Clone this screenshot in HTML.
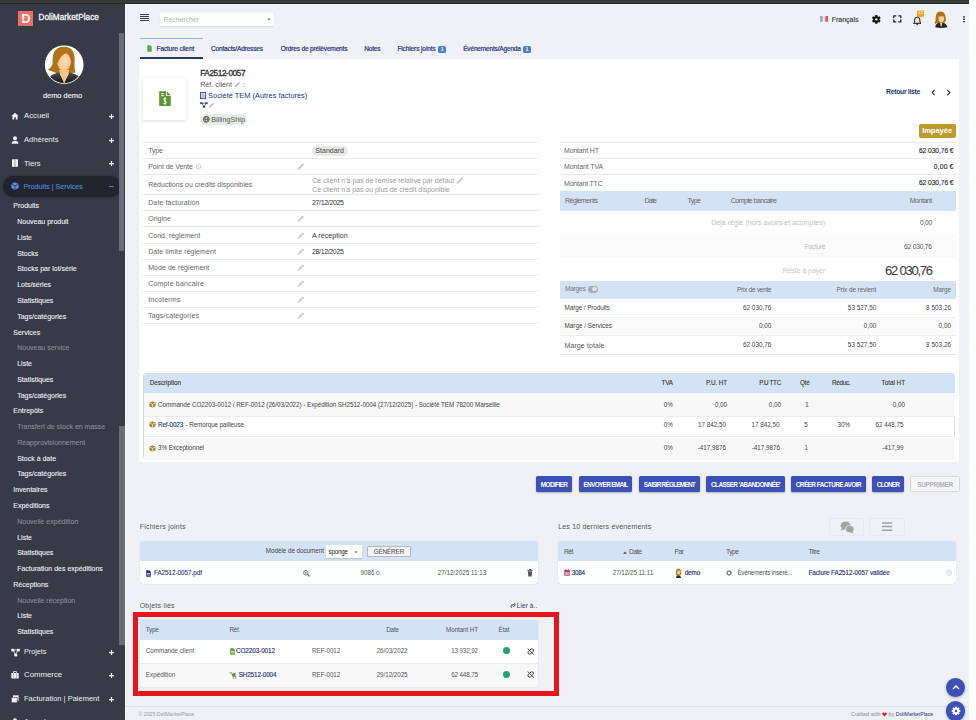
<!DOCTYPE html>
<html><head><meta charset="utf-8"><title>FA2512-0057</title>
<style>
html,body{margin:0;padding:0;width:976px;height:720px;overflow:hidden;background:#f0f1f6;}
body{position:relative;font-family:"Liberation Sans", sans-serif;}
.t{position:absolute;white-space:nowrap;font-family:"Liberation Sans", sans-serif;}
.r{position:absolute;}
</style></head><body>
<div class="r" style="left:0.00px;top:0.00px;width:976.00px;height:720.00px;background:#f0f1f6;"></div>
<div class="r" style="left:969.00px;top:0.00px;width:7.00px;height:720.00px;background:#ffffff;"></div>
<div class="r" style="left:0.00px;top:0.00px;width:969.00px;height:3.00px;background:#3a3a3b;"></div>
<div class="r" style="left:0.00px;top:3.00px;width:969.00px;height:1.00px;background:#262828;"></div>
<div class="r" style="left:0.00px;top:4.00px;width:125.00px;height:716.00px;background:#373b47;"></div>
<div class="r" style="left:18.20px;top:11.10px;width:14.90px;height:14.50px;background:#ec6f60;"></div>
<div class="t" style="left:15.90px;width:20px;text-align:center;top:12.77px;font-size:12.4px;line-height:12.4px;color:#fff;font-weight:700;">D</div>
<div class="t" style="left:38.50px;top:13.91px;font-size:8.2px;line-height:8.2px;color:#f4f4f8;font-weight:400;letter-spacing:0.057px;-webkit-text-stroke:0.3px #f4f4f8;">DoliMarketPlace</div>
<svg class="r" style="left:44px;top:45px;" width="40" height="40" viewBox="0 0 40 40">
<defs><clipPath id="avc"><circle cx="20.2" cy="19.7" r="18.5"/></clipPath>
<radialGradient id="fg" cx="0.55" cy="0.45" r="0.6"><stop offset="0" stop-color="#fde3bd"/><stop offset="1" stop-color="#f3c084"/></radialGradient>
<linearGradient id="bg1" x1="0" y1="0" x2="0" y2="1"><stop offset="0" stop-color="#4a4a4e"/><stop offset="1" stop-color="#111"/></linearGradient></defs>
<circle cx="20.2" cy="19.7" r="19.3" fill="#ffffff"/>
<g clip-path="url(#avc)">
<path d="M9.5 27 Q6 25.5 4 24.8 Q7.5 23 8.6 19 Q7.6 7 13.5 3.2 Q20 0.4 26 3.2 Q31.5 7 30.6 16 Q30.2 23 31.5 27.5 L24 28.5 L14 28.5 Z" fill="#b0731a"/>
<path d="M4.5 40 L5.2 32.5 Q8 29 15 27.6 L20.2 37 L25.4 27.6 Q32 29 35.4 31.8 L36 40 Z" fill="url(#bg1)"/>
<path d="M15 25 L20.2 39 L25.4 25 Z" fill="#f5c386"/>
<ellipse cx="20" cy="16.8" rx="6.9" ry="9" fill="url(#fg)"/>
<path d="M11.8 17.5 Q11.5 8.5 19 6.2 Q23 5.8 24 7.5 Q17 9 13.8 17.8 Z" fill="#b0731a"/>
<path d="M26.4 9 Q28 14 27 24 L29.5 24 Q30 14 27 8Z" fill="#a86c14"/>
</g></svg>
<div class="t" style="left:22.50px;width:80px;text-align:center;top:91.90px;font-size:7.4px;line-height:7.4px;color:#eceef2;font-weight:400;-webkit-text-stroke:0.15px #eceef2;">demo demo</div>
<svg class="r" style="left:11px;top:111.7px;" width="8" height="8" viewBox="0 0 8 8"><path d="M0.5 4 L4 0.8 L7.5 4 L6.6 4 L6.6 7.5 L4.8 7.5 L4.8 5.2 L3.2 5.2 L3.2 7.5 L1.4 7.5 L1.4 4Z" fill="#f0f0f4"/></svg>
<div class="t" style="left:24.00px;top:111.93px;font-size:7.75px;line-height:7.75px;color:#eceef2;font-weight:400;">Accueil</div>
<svg class="r" style="left:107.5px;top:112.8px;" width="7" height="7" viewBox="0 0 7 7"><path d="M1.0 3.5 L6.0 3.5 M3.5 1.0 L3.5 6.0" stroke="#e8e9ee" stroke-width="1.25"/></svg>
<svg class="r" style="left:11px;top:135.6px;" width="8" height="8" viewBox="0 0 8 8"><circle cx="4" cy="2.3" r="2" fill="#f0f0f4"/><path d="M0.6 7.8 Q0.6 4.8 4 4.8 Q7.4 4.8 7.4 7.8Z" fill="#f0f0f4"/></svg>
<div class="t" style="left:24.00px;top:135.93px;font-size:7.55px;line-height:7.55px;color:#eceef2;font-weight:400;">Adhérents</div>
<svg class="r" style="left:107.5px;top:136.7px;" width="7" height="7" viewBox="0 0 7 7"><path d="M1.0 3.5 L6.0 3.5 M3.5 1.0 L3.5 6.0" stroke="#e8e9ee" stroke-width="1.25"/></svg>
<svg class="r" style="left:11px;top:159.2px;" width="8" height="8" viewBox="0 0 8 8"><rect x="1" y="0.3" width="6" height="7.5" fill="#f0f0f4"/><rect x="3.6" y="1" width="0.8" height="6.5" fill="#8a8f9a"/></svg>
<div class="t" style="left:24.00px;top:159.50px;font-size:7.6px;line-height:7.6px;color:#eceef2;font-weight:400;">Tiers</div>
<svg class="r" style="left:107.5px;top:160.29999999999998px;" width="7" height="7" viewBox="0 0 7 7"><path d="M1.0 3.5 L6.0 3.5 M3.5 1.0 L3.5 6.0" stroke="#e8e9ee" stroke-width="1.25"/></svg>
<div class="r" style="left:2.90px;top:175.60px;width:118.10px;height:21.50px;background:#22252c;border-radius:11px;box-shadow:0 0 3px rgba(0,0,0,0.35);"></div>
<svg class="r" style="left:10.5px;top:182.3px;" width="8" height="8" viewBox="0 0 8 8"><path d="M4 0.3 L7.6 2 L7.6 6 L4 7.8 L0.4 6 L0.4 2Z" fill="#5d8ee8"/><path d="M0.6 2.2 L4 3.9 L7.4 2.2 M4 3.9 L4 7.6" stroke="#22252b" stroke-width="0.7" fill="none"/></svg>
<div class="t" style="left:23.50px;top:183.62px;font-size:7.15px;line-height:7.15px;color:#4f85dc;font-weight:400;-webkit-text-stroke:0.15px #4f85dc;">Produits | Services</div>
<svg class="r" style="left:108px;top:183px;" width="7" height="7" viewBox="0 0 7 7"><path d="M1 3.5 L6 3.5" stroke="#4f72b8" stroke-width="1.2"/></svg>
<div class="t" style="left:13.30px;top:202.34px;font-size:7.0px;line-height:7.0px;color:#eef0f4;font-weight:400;-webkit-text-stroke:0.1px #eef0f4;">Produits</div>
<div class="t" style="left:17.20px;top:218.11px;font-size:7.0px;line-height:7.0px;color:#eef0f4;font-weight:400;-webkit-text-stroke:0.1px #eef0f4;">Nouveau produit</div>
<div class="t" style="left:17.20px;top:233.88px;font-size:7.0px;line-height:7.0px;color:#eef0f4;font-weight:400;-webkit-text-stroke:0.1px #eef0f4;">Liste</div>
<div class="t" style="left:17.20px;top:249.65px;font-size:7.0px;line-height:7.0px;color:#eef0f4;font-weight:400;-webkit-text-stroke:0.1px #eef0f4;">Stocks</div>
<div class="t" style="left:17.20px;top:265.42px;font-size:7.0px;line-height:7.0px;color:#eef0f4;font-weight:400;-webkit-text-stroke:0.1px #eef0f4;">Stocks par lot/série</div>
<div class="t" style="left:17.20px;top:281.19px;font-size:7.0px;line-height:7.0px;color:#eef0f4;font-weight:400;-webkit-text-stroke:0.1px #eef0f4;">Lots/séries</div>
<div class="t" style="left:17.20px;top:296.96px;font-size:7.0px;line-height:7.0px;color:#eef0f4;font-weight:400;-webkit-text-stroke:0.1px #eef0f4;">Statistiques</div>
<div class="t" style="left:17.20px;top:312.73px;font-size:7.0px;line-height:7.0px;color:#eef0f4;font-weight:400;-webkit-text-stroke:0.1px #eef0f4;">Tags/catégories</div>
<div class="t" style="left:13.30px;top:328.50px;font-size:7.0px;line-height:7.0px;color:#eef0f4;font-weight:400;-webkit-text-stroke:0.1px #eef0f4;">Services</div>
<div class="t" style="left:17.20px;top:344.27px;font-size:7.0px;line-height:7.0px;color:#878c98;font-weight:400;-webkit-text-stroke:0.1px #878c98;">Nouveau service</div>
<div class="t" style="left:17.20px;top:360.04px;font-size:7.0px;line-height:7.0px;color:#eef0f4;font-weight:400;-webkit-text-stroke:0.1px #eef0f4;">Liste</div>
<div class="t" style="left:17.20px;top:375.81px;font-size:7.0px;line-height:7.0px;color:#eef0f4;font-weight:400;-webkit-text-stroke:0.1px #eef0f4;">Statistiques</div>
<div class="t" style="left:17.20px;top:391.58px;font-size:7.0px;line-height:7.0px;color:#eef0f4;font-weight:400;-webkit-text-stroke:0.1px #eef0f4;">Tags/catégories</div>
<div class="t" style="left:13.30px;top:407.35px;font-size:7.0px;line-height:7.0px;color:#eef0f4;font-weight:400;-webkit-text-stroke:0.1px #eef0f4;">Entrepôts</div>
<div class="t" style="left:17.20px;top:423.12px;font-size:7.0px;line-height:7.0px;color:#878c98;font-weight:400;-webkit-text-stroke:0.1px #878c98;">Transfert de stock en masse</div>
<div class="t" style="left:17.20px;top:438.89px;font-size:7.0px;line-height:7.0px;color:#878c98;font-weight:400;-webkit-text-stroke:0.1px #878c98;">Réapprovisionnement</div>
<div class="t" style="left:17.20px;top:454.66px;font-size:7.0px;line-height:7.0px;color:#eef0f4;font-weight:400;-webkit-text-stroke:0.1px #eef0f4;">Stock à date</div>
<div class="t" style="left:17.20px;top:470.43px;font-size:7.0px;line-height:7.0px;color:#eef0f4;font-weight:400;-webkit-text-stroke:0.1px #eef0f4;">Tags/catégories</div>
<div class="t" style="left:13.30px;top:486.20px;font-size:7.0px;line-height:7.0px;color:#eef0f4;font-weight:400;-webkit-text-stroke:0.1px #eef0f4;">Inventaires</div>
<div class="t" style="left:13.30px;top:501.97px;font-size:7.0px;line-height:7.0px;color:#eef0f4;font-weight:400;-webkit-text-stroke:0.1px #eef0f4;">Expéditions</div>
<div class="t" style="left:17.20px;top:517.74px;font-size:7.0px;line-height:7.0px;color:#878c98;font-weight:400;-webkit-text-stroke:0.1px #878c98;">Nouvelle expédition</div>
<div class="t" style="left:17.20px;top:533.51px;font-size:7.0px;line-height:7.0px;color:#eef0f4;font-weight:400;-webkit-text-stroke:0.1px #eef0f4;">Liste</div>
<div class="t" style="left:17.20px;top:549.28px;font-size:7.0px;line-height:7.0px;color:#eef0f4;font-weight:400;-webkit-text-stroke:0.1px #eef0f4;">Statistiques</div>
<div class="t" style="left:17.20px;top:565.05px;font-size:7.0px;line-height:7.0px;color:#eef0f4;font-weight:400;-webkit-text-stroke:0.1px #eef0f4;">Facturation des expéditions</div>
<div class="t" style="left:13.30px;top:580.82px;font-size:7.0px;line-height:7.0px;color:#eef0f4;font-weight:400;-webkit-text-stroke:0.1px #eef0f4;">Réceptions</div>
<div class="t" style="left:17.20px;top:596.59px;font-size:7.0px;line-height:7.0px;color:#878c98;font-weight:400;-webkit-text-stroke:0.1px #878c98;">Nouvelle réception</div>
<div class="t" style="left:17.20px;top:612.36px;font-size:7.0px;line-height:7.0px;color:#eef0f4;font-weight:400;-webkit-text-stroke:0.1px #eef0f4;">Liste</div>
<div class="t" style="left:17.20px;top:628.13px;font-size:7.0px;line-height:7.0px;color:#eef0f4;font-weight:400;-webkit-text-stroke:0.1px #eef0f4;">Statistiques</div>
<svg class="r" style="left:11px;top:647.5px;" width="9" height="9" viewBox="0 0 9 9"><rect x="0.3" y="0.8" width="3" height="2.6" fill="#f0f0f4"/><rect x="5.8" y="0.8" width="3" height="2.6" fill="#f0f0f4"/><rect x="3.2" y="5.6" width="3" height="2.8" fill="#f0f0f4"/><path d="M2 2 L7 2 M2 2 L4.6 6.5 M7 2 L4.6 6.5" stroke="#f0f0f4" stroke-width="0.8"/></svg>
<div class="t" style="left:24.00px;top:648.00px;font-size:7.2px;line-height:7.2px;color:#eceef2;font-weight:400;">Projets</div>
<svg class="r" style="left:107.5px;top:648.6px;" width="7" height="7" viewBox="0 0 7 7"><path d="M1.0 3.5 L6.0 3.5 M3.5 1.0 L3.5 6.0" stroke="#e8e9ee" stroke-width="1.25"/></svg>
<svg class="r" style="left:11px;top:671.0px;" width="8" height="8" viewBox="0 0 8 8"><rect x="0.3" y="2" width="7.4" height="5.6" rx="0.6" fill="#f0f0f4"/><rect x="2.6" y="0.6" width="2.8" height="1.8" fill="none" stroke="#f0f0f4" stroke-width="0.8"/><rect x="2" y="2" width="0.6" height="5.6" fill="#8a8f9a"/><rect x="5.4" y="2" width="0.6" height="5.6" fill="#8a8f9a"/></svg>
<div class="t" style="left:24.00px;top:671.21px;font-size:7.8px;line-height:7.8px;color:#eceef2;font-weight:400;">Commerce</div>
<svg class="r" style="left:107.5px;top:672.1px;" width="7" height="7" viewBox="0 0 7 7"><path d="M1.0 3.5 L6.0 3.5 M3.5 1.0 L3.5 6.0" stroke="#e8e9ee" stroke-width="1.25"/></svg>
<svg class="r" style="left:11px;top:694.5px;" width="8" height="8" viewBox="0 0 8 8"><rect x="2" y="0.3" width="5.6" height="5.5" fill="#f0f0f4"/><rect x="0.3" y="2.3" width="5.8" height="5.5" fill="#f0f0f4" stroke="#373b47" stroke-width="0.6"/></svg>
<div class="t" style="left:24.00px;top:694.85px;font-size:7.5px;line-height:7.5px;color:#eceef2;font-weight:400;">Facturation | Paiement</div>
<svg class="r" style="left:107.5px;top:695.6px;" width="7" height="7" viewBox="0 0 7 7"><path d="M1.0 3.5 L6.0 3.5 M3.5 1.0 L3.5 6.0" stroke="#e8e9ee" stroke-width="1.25"/></svg>
<svg class="r" style="left:11px;top:718px;" width="8" height="8" viewBox="0 0 8 8"><circle cx="4" cy="2.3" r="2" fill="#f0f0f4"/><path d="M0.6 7.8 Q0.6 4.8 4 4.8 Q7.4 4.8 7.4 7.8Z" fill="#f0f0f4"/></svg>
<div class="t" style="left:24.00px;top:718.35px;font-size:7.5px;line-height:7.5px;color:#f0f0f4;font-weight:400;">Agenda</div>
<div class="r" style="left:119.00px;top:33.00px;width:5.00px;height:218.00px;background:#676d78;"></div>
<div class="r" style="left:119.00px;top:426.40px;width:5.60px;height:218.40px;background:#676d78;"></div>
<div class="r" style="left:125.00px;top:4.00px;width:1.00px;height:716.00px;background:#f5f6fa;"></div>
<div class="r" style="left:125.00px;top:418.00px;width:1.00px;height:302.00px;background:#fbfbfd;"></div>
<div class="r" style="left:140.00px;top:13.60px;width:9.30px;height:1.10px;background:#3a3a48;"></div>
<div class="r" style="left:140.00px;top:15.70px;width:9.30px;height:1.10px;background:#3a3a48;"></div>
<div class="r" style="left:140.00px;top:17.80px;width:9.30px;height:1.10px;background:#3a3a48;"></div>
<div class="r" style="left:140.00px;top:19.90px;width:9.30px;height:1.10px;background:#3a3a48;"></div>
<div class="r" style="left:160.00px;top:13.00px;width:114.00px;height:12.50px;background:#ffffff;box-shadow:0 1px 1px rgba(0,0,0,0.08);"></div>
<div class="t" style="left:163.50px;top:16.94px;font-size:6.9px;line-height:6.9px;color:#b0b0b8;font-weight:400;letter-spacing:-0.007px;">Rechercher</div>
<svg class="r" style="left:266.5px;top:17.8px;" width="4" height="3" viewBox="0 0 4 3"><path d="M0.4 0.5 L3.6 0.5 L2 2.5Z" fill="#777"/></svg>
<svg class="r" style="left:820px;top:16px;" width="9" height="6" viewBox="0 0 9 6"><rect x="0.2" y="0" width="2.6" height="5.8" fill="#86a0e0"/><rect x="2.8" y="0" width="2.6" height="5.8" fill="#e8e8ea"/><rect x="5.4" y="0" width="2.6" height="5.8" fill="#e85050"/></svg>
<div class="t" style="left:831.80px;top:16.19px;font-size:7.0px;line-height:7.0px;color:#3a3a40;font-weight:400;letter-spacing:-0.020px;-webkit-text-stroke:0.15px #3a3a40;">Français</div>
<svg class="r" style="left:871.5px;top:14.8px;" width="9" height="9" viewBox="0 0 9 9"><g transform="translate(4.3,4.4)"><circle r="3.2" fill="#111"/><rect x="-1.15" y="-4.4" width="2.3" height="2.2" rx="0.4" fill="#111" transform="rotate(0)"/><rect x="-1.15" y="-4.4" width="2.3" height="2.2" rx="0.4" fill="#111" transform="rotate(60)"/><rect x="-1.15" y="-4.4" width="2.3" height="2.2" rx="0.4" fill="#111" transform="rotate(120)"/><rect x="-1.15" y="-4.4" width="2.3" height="2.2" rx="0.4" fill="#111" transform="rotate(180)"/><rect x="-1.15" y="-4.4" width="2.3" height="2.2" rx="0.4" fill="#111" transform="rotate(240)"/><rect x="-1.15" y="-4.4" width="2.3" height="2.2" rx="0.4" fill="#111" transform="rotate(300)"/><circle r="1.2" fill="#f0f1f6"/></g></svg>
<svg class="r" style="left:892.6px;top:15px;" width="9" height="8" viewBox="0 0 9 8"><path d="M0.8 2.8 L0.8 0.8 L2.8 0.8 M5.8 0.8 L7.8 0.8 L7.8 2.8 M7.8 4.9 L7.8 6.9 L5.8 6.9 M2.8 6.9 L0.8 6.9 L0.8 4.9" stroke="#222" stroke-width="1.25" fill="none" stroke-linecap="round" stroke-linejoin="round"/></svg>
<svg class="r" style="left:913.4px;top:14.5px;" width="9" height="10" viewBox="0 0 9 10"><path d="M4.2 2 Q1.6 2.3 1.6 5.2 L1.6 7.3 L0.5 8.3 L8 8.3 L6.9 7.3 L6.9 5.2 Q6.9 2.3 4.2 2Z" fill="none" stroke="#111" stroke-width="1"/><rect x="3.3" y="8.6" width="1.9" height="1.1" rx="0.5" fill="#111"/></svg>
<div class="r" style="left:917.00px;top:10.00px;width:7.00px;height:6.90px;background:#f7a128;border-radius:1.5px;"></div>
<div class="t" style="left:915.50px;width:10px;text-align:center;top:11.26px;font-size:4.6px;line-height:4.6px;color:#ffe9c8;font-weight:700;">15</div>
<svg class="r" style="left:934px;top:11px;" width="14" height="17" viewBox="0 0 14 17"><path d="M1.2 16.2 Q1.5 11.6 7 11.2 Q12.5 11.6 13.4 16.2 Q7 17.6 1.2 16.2Z" fill="#262628"/>
<path d="M5.6 11.2 L7.2 16.4 L8.6 11.2Z" fill="#f5c386"/>
<path d="M1.2 13 Q0.2 11 1.6 10 Q1.2 4 3.2 1.6 Q6.5 -0.6 9.6 1.4 Q12 3.5 11.8 9.5 Q11.6 11.5 10 11.8 L3 12 Z" fill="#ad7414"/>
<ellipse cx="7.3" cy="7.2" rx="2.8" ry="4" fill="#f8cf9a"/>
<path d="M4.2 5.8 Q4.6 2.6 7.6 2.6 Q10.2 3 10.6 6.5 Q9 4.2 4.2 5.8Z" fill="#ad7414"/></svg>
<svg class="r" style="left:961.5px;top:15px;" width="4" height="8" viewBox="0 0 4 8"><circle cx="2" cy="1.8" r="0.85" fill="#222"/><circle cx="2" cy="4.2" r="0.85" fill="#222"/><circle cx="2" cy="6.6" r="0.85" fill="#222"/></svg>
<div class="r" style="left:140.00px;top:38.00px;width:63.00px;height:1.00px;background:#8fb0e6;"></div>
<div class="r" style="left:140.00px;top:57.00px;width:63.00px;height:2.00px;background:#263c5c;"></div>
<svg class="r" style="left:147px;top:44.8px;" width="5" height="7" viewBox="0 0 5 7"><path d="M0.3 0.3 L3.2 0.3 L4.7 1.8 L4.7 6.7 L0.3 6.7Z" fill="#5aa848"/></svg>
<div class="t" style="left:156.60px;top:46.14px;font-size:6.5px;line-height:6.5px;color:#25327a;font-weight:400;letter-spacing:-0.109px;-webkit-text-stroke:0.2px #25327a;">Facture client</div>
<div class="t" style="left:211.00px;top:46.14px;font-size:6.5px;line-height:6.5px;color:#25327a;font-weight:400;letter-spacing:-0.160px;-webkit-text-stroke:0.2px #25327a;">Contacts/Adresses</div>
<div class="t" style="left:280.80px;top:46.14px;font-size:6.5px;line-height:6.5px;color:#25327a;font-weight:400;letter-spacing:-0.144px;-webkit-text-stroke:0.2px #25327a;">Ordres de prélèvements</div>
<div class="t" style="left:364.20px;top:46.14px;font-size:6.5px;line-height:6.5px;color:#25327a;font-weight:400;letter-spacing:-0.145px;-webkit-text-stroke:0.2px #25327a;">Notes</div>
<div class="t" style="left:397.40px;top:46.14px;font-size:6.5px;line-height:6.5px;color:#25327a;font-weight:400;letter-spacing:-0.102px;-webkit-text-stroke:0.2px #25327a;">Fichiers joints</div>
<div class="t" style="left:463.20px;top:46.14px;font-size:6.5px;line-height:6.5px;color:#25327a;font-weight:400;letter-spacing:-0.165px;-webkit-text-stroke:0.2px #25327a;">Événements/Agenda</div>
<div class="r" style="left:437.80px;top:45.80px;width:8.60px;height:6.80px;background:#4c7dd2;border-radius:1.5px;"></div>
<div class="t" style="left:438.10px;width:8px;text-align:center;top:47.07px;font-size:5.2px;line-height:5.2px;color:#fff;font-weight:700;">1</div>
<div class="r" style="left:522.70px;top:45.80px;width:8.60px;height:6.80px;background:#4c7dd2;border-radius:1.5px;"></div>
<div class="t" style="left:523.00px;width:8px;text-align:center;top:47.07px;font-size:5.2px;line-height:5.2px;color:#fff;font-weight:700;">1</div>
<div class="r" style="left:139.20px;top:59.00px;width:819.80px;height:403.00px;background:#ffffff;"></div>
<div class="r" style="left:143.20px;top:77.90px;width:43.10px;height:42.10px;background:#ffffff;box-shadow:0 1px 3px rgba(0,0,0,0.16);"></div>
<svg class="r" style="left:158.6px;top:90.8px;" width="12" height="15.4" viewBox="0 0 12 15.4"><path d="M0.2 0.2 L7.0 0.2 L7.0 5.0 L11.8 5.0 L11.8 15.2 L0.2 15.2Z" fill="#5b9434"/>
<path d="M7.8 0.2 L11.8 4.2 L7.8 4.2Z" fill="#5b9434"/>
<rect x="2.0" y="2.3" width="3.2" height="0.9" fill="#fff"/><rect x="2.0" y="4.3" width="3.2" height="0.9" fill="#fff"/>
<path d="M7.3 7.6 Q6.2 7.0 5.3 7.6 Q4.6 8.4 5.4 9.4 Q6.4 10.2 7.0 10.8 Q7.6 11.8 6.6 12.4 Q5.6 12.9 4.6 12.2" stroke="#fff" stroke-width="1.1" fill="none"/>
<rect x="5.55" y="6.3" width="0.9" height="7.5" fill="#fff"/></svg>
<div class="t" style="left:200.20px;top:69.51px;font-size:8.2px;line-height:8.2px;color:#333;font-weight:400;letter-spacing:-0.384px;-webkit-text-stroke:0.35px #333;">FA2512-0057</div>
<div class="t" style="left:200.20px;top:81.00px;font-size:7.2px;line-height:7.2px;color:#555;font-weight:400;letter-spacing:-0.011px;">Réf. client</div>
<svg class="r" style="left:233.5px;top:80.5px;" width="7" height="7" viewBox="0 0 7 7"><path d="M0.8 6.2 L1.2 4.6 L5 0.8 L6.2 2 L2.4 5.8Z" fill="#bbb"/></svg>
<div class="t" style="left:242.50px;top:81.00px;font-size:7.2px;line-height:7.2px;color:#555;font-weight:400;">:</div>
<svg class="r" style="left:200.2px;top:91.9px;" width="6" height="7" viewBox="0 0 6 7"><rect x="0.4" y="0.4" width="5.2" height="6.2" fill="none" stroke="#3a3f8e" stroke-width="0.9"/><rect x="1.6" y="1.4" width="1" height="4.6" fill="#3a3f8e" opacity="0.6"/><rect x="3.4" y="1.4" width="1" height="4.6" fill="#3a3f8e" opacity="0.6"/></svg>
<div class="t" style="left:208.10px;top:92.10px;font-size:7.4px;line-height:7.4px;color:#25337c;font-weight:400;letter-spacing:0.012px;">Société TEM (Autres factures)</div>
<svg class="r" style="left:200px;top:102px;" width="8" height="6" viewBox="0 0 8 6"><rect x="0.2" y="0.3" width="2.2" height="1.8" fill="#25337c"/><rect x="5.4" y="0.3" width="2.2" height="1.8" fill="#25337c"/><rect x="2.9" y="3.8" width="2.2" height="1.9" fill="#25337c"/><path d="M1.3 1.2 L6.5 1.2 M1.3 1.2 L4 4.5 M6.5 1.2 L4 4.5" stroke="#25337c" stroke-width="0.7"/></svg>
<svg class="r" style="left:207.5px;top:101.5px;" width="7" height="7" viewBox="0 0 7 7"><path d="M0.8 6.2 L1.2 4.6 L5 0.8 L6.2 2 L2.4 5.8Z" fill="#c4c4c4"/></svg>
<div class="r" style="left:200.20px;top:114.00px;width:47.00px;height:11.00px;background:#e6ebe4;border-radius:5.5px;"></div>
<svg class="r" style="left:202.8px;top:116.3px;" width="7" height="7" viewBox="0 0 7 7"><circle cx="3.3" cy="3.3" r="2.9" fill="none" stroke="#444" stroke-width="0.9"/><ellipse cx="3.3" cy="3.3" rx="1.2" ry="2.9" fill="none" stroke="#444" stroke-width="0.7"/><path d="M0.4 3.3 L6.2 3.3" stroke="#444" stroke-width="0.7"/></svg>
<div class="t" style="left:211.20px;top:116.30px;font-size:7.2px;line-height:7.2px;color:#555;font-weight:400;letter-spacing:0.018px;">BillingShip</div>
<div class="t" style="left:886.10px;top:89.09px;font-size:6.8px;line-height:6.8px;color:#25357a;font-weight:700;letter-spacing:-0.292px;">Retour liste</div>
<svg class="r" style="left:930.5px;top:88.6px;" width="5" height="7" viewBox="0 0 5 7"><path d="M3.6 0.9 L1.2 3.5 L3.6 6.1" stroke="#222" stroke-width="1.1" fill="none"/></svg>
<svg class="r" style="left:945.8px;top:88.6px;" width="5" height="7" viewBox="0 0 5 7"><path d="M1.4 0.9 L3.8 3.5 L1.4 6.1" stroke="#222" stroke-width="1.1" fill="none"/></svg>
<div class="r" style="left:918.90px;top:124.00px;width:36.90px;height:13.70px;background:#bd9a2e;border-radius:2px;"></div>
<div class="t" style="left:907.10px;width:60px;text-align:center;top:127.30px;font-size:7.6px;line-height:7.6px;color:#ffffff;font-weight:700;letter-spacing:-0.070px;">Impayée</div>
<div class="r" style="left:143.10px;top:142.10px;width:397.20px;height:1.00px;background:#eaeaec;"></div>
<div class="r" style="left:143.10px;top:157.60px;width:397.20px;height:1.00px;background:#eaeaec;"></div>
<div class="r" style="left:143.10px;top:173.60px;width:397.20px;height:1.00px;background:#eaeaec;"></div>
<div class="r" style="left:143.10px;top:193.70px;width:397.20px;height:1.00px;background:#eaeaec;"></div>
<div class="r" style="left:143.10px;top:209.90px;width:397.20px;height:1.00px;background:#eaeaec;"></div>
<div class="r" style="left:143.10px;top:226.10px;width:397.20px;height:1.00px;background:#eaeaec;"></div>
<div class="r" style="left:143.10px;top:242.80px;width:397.20px;height:1.00px;background:#eaeaec;"></div>
<div class="r" style="left:143.10px;top:258.80px;width:397.20px;height:1.00px;background:#eaeaec;"></div>
<div class="r" style="left:143.10px;top:274.80px;width:397.20px;height:1.00px;background:#eaeaec;"></div>
<div class="r" style="left:143.10px;top:290.80px;width:397.20px;height:1.00px;background:#eaeaec;"></div>
<div class="r" style="left:143.10px;top:307.10px;width:397.20px;height:1.00px;background:#eaeaec;"></div>
<div class="r" style="left:143.10px;top:323.10px;width:397.20px;height:1.00px;background:#eaeaec;"></div>
<div class="t" style="left:148.20px;top:147.19px;font-size:7.0px;line-height:7.0px;color:#666;font-weight:400;letter-spacing:-0.125px;">Type</div>
<div class="t" style="left:148.20px;top:162.99px;font-size:7.0px;line-height:7.0px;color:#666;font-weight:400;letter-spacing:-0.064px;">Point de Vente</div>
<svg class="r" style="left:297.2px;top:162.9px;" width="7.5" height="7.5" viewBox="0 0 7.5 7.5"><path d="M0.5 6.9 L0.9 5.0 L5.2 0.7 Q5.7 0.3 6.2 0.8 L6.7 1.3 Q7.1 1.8 6.7 2.2 L2.4 6.5Z" fill="#cdcdcd"/></svg>
<div class="t" style="left:148.20px;top:180.89px;font-size:7.0px;line-height:7.0px;color:#666;font-weight:400;letter-spacing:-0.009px;">Réductions ou crédits disponibles</div>
<div class="t" style="left:148.20px;top:198.99px;font-size:7.0px;line-height:7.0px;color:#666;font-weight:400;letter-spacing:0.125px;">Date facturation</div>
<div class="t" style="left:148.20px;top:215.19px;font-size:7.0px;line-height:7.0px;color:#666;font-weight:400;letter-spacing:0.006px;">Origine</div>
<svg class="r" style="left:297.2px;top:215.1px;" width="7.5" height="7.5" viewBox="0 0 7.5 7.5"><path d="M0.5 6.9 L0.9 5.0 L5.2 0.7 Q5.7 0.3 6.2 0.8 L6.7 1.3 Q7.1 1.8 6.7 2.2 L2.4 6.5Z" fill="#cdcdcd"/></svg>
<div class="t" style="left:148.20px;top:231.59px;font-size:7.0px;line-height:7.0px;color:#666;font-weight:400;letter-spacing:0.011px;">Cond. règlement</div>
<svg class="r" style="left:297.2px;top:231.5px;" width="7.5" height="7.5" viewBox="0 0 7.5 7.5"><path d="M0.5 6.9 L0.9 5.0 L5.2 0.7 Q5.7 0.3 6.2 0.8 L6.7 1.3 Q7.1 1.8 6.7 2.2 L2.4 6.5Z" fill="#cdcdcd"/></svg>
<div class="t" style="left:148.20px;top:247.89px;font-size:7.0px;line-height:7.0px;color:#666;font-weight:400;letter-spacing:0.078px;">Date limite règlement</div>
<svg class="r" style="left:297.2px;top:247.8px;" width="7.5" height="7.5" viewBox="0 0 7.5 7.5"><path d="M0.5 6.9 L0.9 5.0 L5.2 0.7 Q5.7 0.3 6.2 0.8 L6.7 1.3 Q7.1 1.8 6.7 2.2 L2.4 6.5Z" fill="#cdcdcd"/></svg>
<div class="t" style="left:148.20px;top:263.99px;font-size:7.0px;line-height:7.0px;color:#666;font-weight:400;letter-spacing:0.049px;">Mode de règlement</div>
<svg class="r" style="left:297.2px;top:263.9px;" width="7.5" height="7.5" viewBox="0 0 7.5 7.5"><path d="M0.5 6.9 L0.9 5.0 L5.2 0.7 Q5.7 0.3 6.2 0.8 L6.7 1.3 Q7.1 1.8 6.7 2.2 L2.4 6.5Z" fill="#cdcdcd"/></svg>
<div class="t" style="left:148.20px;top:279.99px;font-size:7.0px;line-height:7.0px;color:#666;font-weight:400;letter-spacing:0.171px;">Compte bancaire</div>
<svg class="r" style="left:297.2px;top:279.9px;" width="7.5" height="7.5" viewBox="0 0 7.5 7.5"><path d="M0.5 6.9 L0.9 5.0 L5.2 0.7 Q5.7 0.3 6.2 0.8 L6.7 1.3 Q7.1 1.8 6.7 2.2 L2.4 6.5Z" fill="#cdcdcd"/></svg>
<div class="t" style="left:148.20px;top:296.09px;font-size:7.0px;line-height:7.0px;color:#666;font-weight:400;letter-spacing:0.171px;">Incoterms</div>
<svg class="r" style="left:297.2px;top:296.0px;" width="7.5" height="7.5" viewBox="0 0 7.5 7.5"><path d="M0.5 6.9 L0.9 5.0 L5.2 0.7 Q5.7 0.3 6.2 0.8 L6.7 1.3 Q7.1 1.8 6.7 2.2 L2.4 6.5Z" fill="#cdcdcd"/></svg>
<div class="t" style="left:148.20px;top:312.29px;font-size:7.0px;line-height:7.0px;color:#666;font-weight:400;letter-spacing:0.127px;">Tags/catégories</div>
<svg class="r" style="left:297.2px;top:312.2px;" width="7.5" height="7.5" viewBox="0 0 7.5 7.5"><path d="M0.5 6.9 L0.9 5.0 L5.2 0.7 Q5.7 0.3 6.2 0.8 L6.7 1.3 Q7.1 1.8 6.7 2.2 L2.4 6.5Z" fill="#cdcdcd"/></svg>
<svg class="r" style="left:196px;top:164px;" width="5.5" height="5.5" viewBox="0 0 5.5 5.5"><circle cx="2.7" cy="2.7" r="2.2" fill="none" stroke="#bbb" stroke-width="0.7"/><rect x="2.35" y="2.2" width="0.7" height="1.8" fill="#bbb"/></svg>
<div class="r" style="left:311.80px;top:145.50px;width:35.80px;height:10.20px;background:#e8e8e8;border-radius:5px;"></div>
<div class="t" style="left:315.30px;top:147.19px;font-size:7.0px;line-height:7.0px;color:#444;font-weight:400;letter-spacing:0.041px;">Standard</div>
<div class="t" style="left:312.20px;top:176.79px;font-size:7.0px;line-height:7.0px;color:#9a9a9a;font-weight:400;letter-spacing:-0.004px;">Ce client n'a pas de remise relative par défaut</div>
<svg class="r" style="left:456px;top:176.5px;" width="7.5" height="7.5" viewBox="0 0 7.5 7.5"><path d="M0.5 6.9 L0.9 5.0 L5.2 0.7 Q5.7 0.3 6.2 0.8 L6.7 1.3 Q7.1 1.8 6.7 2.2 L2.4 6.5Z" fill="#cdcdcd"/></svg>
<div class="t" style="left:312.20px;top:185.89px;font-size:7.0px;line-height:7.0px;color:#9a9a9a;font-weight:400;letter-spacing:-0.020px;">Ce client n'a pas ou plus de crédit disponible</div>
<div class="t" style="left:312.00px;top:199.09px;font-size:7.0px;line-height:7.0px;color:#333;font-weight:400;letter-spacing:-0.337px;">27/12/2025</div>
<div class="t" style="left:312.00px;top:231.59px;font-size:7.0px;line-height:7.0px;color:#333;font-weight:400;letter-spacing:0.058px;">A réception</div>
<div class="t" style="left:312.00px;top:247.89px;font-size:7.0px;line-height:7.0px;color:#333;font-weight:400;letter-spacing:-0.359px;">28/12/2025</div>
<div class="r" style="left:559.50px;top:142.10px;width:396.20px;height:1.00px;background:#eaeaec;"></div>
<div class="r" style="left:559.50px;top:157.90px;width:396.20px;height:1.00px;background:#eaeaec;"></div>
<div class="r" style="left:559.50px;top:174.00px;width:396.20px;height:1.00px;background:#eaeaec;"></div>
<div class="t" style="left:564.00px;top:147.29px;font-size:7.0px;line-height:7.0px;color:#666;font-weight:400;letter-spacing:-0.174px;">Montant HT</div>
<div class="t" style="left:564.00px;top:163.29px;font-size:7.0px;line-height:7.0px;color:#666;font-weight:400;letter-spacing:-0.101px;">Montant TVA</div>
<div class="t" style="left:564.00px;top:179.59px;font-size:7.0px;line-height:7.0px;color:#666;font-weight:400;letter-spacing:-0.202px;">Montant TTC</div>
<div class="t" style="left:553.50px;width:400px;text-align:right;top:148.39px;font-size:6.6px;line-height:6.6px;color:#2a2a2a;font-weight:400;letter-spacing:-0.027px;-webkit-text-stroke:0.15px #2a2a2a;margin-right:0.027px;">62 030,76 €</div>
<div class="t" style="left:553.50px;width:400px;text-align:right;top:164.39px;font-size:6.6px;line-height:6.6px;color:#2a2a2a;font-weight:400;letter-spacing:0.230px;-webkit-text-stroke:0.15px #2a2a2a;margin-right:-0.230px;">0,00 €</div>
<div class="t" style="left:553.50px;width:400px;text-align:right;top:180.39px;font-size:6.6px;line-height:6.6px;color:#2a2a2a;font-weight:400;letter-spacing:-0.027px;-webkit-text-stroke:0.15px #2a2a2a;margin-right:0.027px;">62 030,76 €</div>
<div class="r" style="left:559.50px;top:190.90px;width:396.20px;height:20.10px;background:#d4e2f5;"></div>
<div class="t" style="left:565.00px;top:197.19px;font-size:7.0px;line-height:7.0px;color:#666;font-weight:400;letter-spacing:-0.484px;">Règlements</div>
<div class="t" style="left:644.50px;top:197.19px;font-size:7.0px;line-height:7.0px;color:#666;font-weight:400;letter-spacing:-0.762px;">Date</div>
<div class="t" style="left:687.60px;top:197.19px;font-size:7.0px;line-height:7.0px;color:#666;font-weight:400;letter-spacing:-0.625px;">Type</div>
<div class="t" style="left:730.80px;top:197.19px;font-size:7.0px;line-height:7.0px;color:#666;font-weight:400;letter-spacing:-0.522px;">Compte bancaire</div>
<div class="t" style="left:531.80px;width:400px;text-align:right;top:197.19px;font-size:7.0px;line-height:7.0px;color:#666;font-weight:400;letter-spacing:-0.449px;margin-right:0.449px;">Montant</div>
<div class="r" style="left:559.50px;top:233.80px;width:396.20px;height:0.60px;background:#eeeeee;"></div>
<div class="t" style="left:425.20px;width:400px;text-align:right;top:218.99px;font-size:7.0px;line-height:7.0px;color:#c0c0c0;font-weight:400;letter-spacing:0.031px;margin-right:-0.031px;">Déjà réglé (hors avoirs et acomptes)</div>
<div class="t" style="left:531.80px;width:400px;text-align:right;top:220.09px;font-size:6.6px;line-height:6.6px;color:#555;font-weight:400;letter-spacing:-0.282px;margin-right:0.282px;">0,00</div>
<div class="r" style="left:559.50px;top:234.40px;width:396.20px;height:24.00px;background:#fafafa;"></div>
<div class="t" style="left:425.20px;width:400px;text-align:right;top:243.09px;font-size:7.0px;line-height:7.0px;color:#c0c0c0;font-weight:400;letter-spacing:-0.455px;margin-right:0.455px;">Facturé</div>
<div class="t" style="left:531.80px;width:400px;text-align:right;top:243.99px;font-size:6.6px;line-height:6.6px;color:#555;font-weight:400;letter-spacing:-0.170px;margin-right:0.170px;">62 030,76</div>
<div class="t" style="left:425.20px;width:400px;text-align:right;top:266.59px;font-size:7.0px;line-height:7.0px;color:#c8c8c8;font-weight:400;letter-spacing:-0.082px;margin-right:0.082px;">Reste à payer</div>
<div class="t" style="left:531.80px;width:400px;text-align:right;top:264.08px;font-size:13px;line-height:13px;color:#404040;font-weight:400;letter-spacing:-1.229px;-webkit-text-stroke:0.1px #404040;margin-right:1.229px;">62 030,76</div>
<div class="r" style="left:559.50px;top:281.20px;width:396.20px;height:17.60px;background:#d4e2f5;"></div>
<div class="t" style="left:564.90px;top:286.39px;font-size:6.6px;line-height:6.6px;color:#777;font-weight:400;letter-spacing:-0.222px;">Marges</div>
<div class="r" style="left:587.70px;top:285.80px;width:10.10px;height:6.80px;background:#a9adb3;border-radius:3.4px;"></div>
<div class="r" style="left:592.20px;top:286.90px;width:4.60px;height:4.60px;background:#dfe3ea;border-radius:50%;"></div>
<div class="t" style="left:371.40px;width:400px;text-align:right;top:286.69px;font-size:6.4px;line-height:6.4px;color:#666;font-weight:400;letter-spacing:-0.229px;margin-right:0.229px;">Prix de vente</div>
<div class="t" style="left:476.30px;width:400px;text-align:right;top:286.69px;font-size:6.4px;line-height:6.4px;color:#666;font-weight:400;letter-spacing:-0.072px;margin-right:0.072px;">Prix de revient</div>
<div class="t" style="left:551.00px;width:400px;text-align:right;top:286.69px;font-size:6.4px;line-height:6.4px;color:#666;font-weight:400;letter-spacing:-0.085px;margin-right:0.085px;">Marge</div>
<div class="r" style="left:559.50px;top:317.10px;width:396.20px;height:18.30px;background:#fafafa;"></div>
<div class="r" style="left:559.50px;top:353.90px;width:396.20px;height:1.00px;background:#e4e4e6;"></div>
<div class="r" style="left:559.50px;top:316.80px;width:396.20px;height:0.50px;background:#eeeeee;"></div>
<div class="r" style="left:559.50px;top:335.20px;width:396.20px;height:0.50px;background:#eeeeee;"></div>
<div class="t" style="left:564.50px;top:304.69px;font-size:6.4px;line-height:6.4px;color:#444;font-weight:400;letter-spacing:-0.097px;">Marge / Produits</div>
<div class="t" style="left:564.50px;top:323.29px;font-size:6.4px;line-height:6.4px;color:#444;font-weight:400;letter-spacing:-0.034px;">Marge / Services</div>
<div class="t" style="left:564.50px;top:342.19px;font-size:7.0px;line-height:7.0px;color:#555;font-weight:400;letter-spacing:0.099px;">Marge totale</div>
<div class="t" style="left:371.40px;width:400px;text-align:right;top:304.69px;font-size:6.4px;line-height:6.4px;color:#444;font-weight:400;">62 030,76</div>
<div class="t" style="left:476.30px;width:400px;text-align:right;top:304.69px;font-size:6.4px;line-height:6.4px;color:#444;font-weight:400;">53 527,50</div>
<div class="t" style="left:551.00px;width:400px;text-align:right;top:304.69px;font-size:6.4px;line-height:6.4px;color:#444;font-weight:400;">8 503,26</div>
<div class="t" style="left:371.40px;width:400px;text-align:right;top:323.29px;font-size:6.4px;line-height:6.4px;color:#444;font-weight:400;">0,00</div>
<div class="t" style="left:476.30px;width:400px;text-align:right;top:323.29px;font-size:6.4px;line-height:6.4px;color:#444;font-weight:400;">0,00</div>
<div class="t" style="left:551.00px;width:400px;text-align:right;top:323.29px;font-size:6.4px;line-height:6.4px;color:#444;font-weight:400;">0,00</div>
<div class="t" style="left:371.40px;width:400px;text-align:right;top:342.49px;font-size:6.4px;line-height:6.4px;color:#444;font-weight:400;">62 030,76</div>
<div class="t" style="left:476.30px;width:400px;text-align:right;top:342.49px;font-size:6.4px;line-height:6.4px;color:#444;font-weight:400;">53 527,50</div>
<div class="t" style="left:551.00px;width:400px;text-align:right;top:342.49px;font-size:6.4px;line-height:6.4px;color:#444;font-weight:400;">8 503,26</div>
<div class="r" style="left:143.40px;top:373.20px;width:812.00px;height:87.20px;background:#ffffff;border:1px solid #dcdcdc;border-radius:3px;box-sizing:border-box;"></div>
<div class="r" style="left:143.90px;top:373.70px;width:811.00px;height:19.30px;background:#d4e2f5;border-radius:2.5px 2.5px 0 0;"></div>
<div class="r" style="left:143.90px;top:393.00px;width:811.00px;height:23.20px;background:#f8f8f8;"></div>
<div class="r" style="left:143.90px;top:436.40px;width:811.00px;height:23.50px;background:#f8f8f8;border-radius:0 0 2.5px 2.5px;"></div>
<div class="r" style="left:143.90px;top:415.90px;width:811.00px;height:0.60px;background:#ececec;"></div>
<div class="r" style="left:143.90px;top:436.10px;width:811.00px;height:0.60px;background:#ececec;"></div>
<div class="t" style="left:149.80px;top:379.94px;font-size:6.3px;line-height:6.3px;color:#333;font-weight:400;letter-spacing:-0.031px;-webkit-text-stroke:0.1px #333;">Description</div>
<div class="t" style="left:272.80px;width:400px;text-align:right;top:379.94px;font-size:6.3px;line-height:6.3px;color:#333;font-weight:400;letter-spacing:-0.142px;-webkit-text-stroke:0.1px #333;margin-right:0.142px;">TVA</div>
<div class="t" style="left:326.90px;width:400px;text-align:right;top:379.94px;font-size:6.3px;line-height:6.3px;color:#333;font-weight:400;letter-spacing:-0.098px;-webkit-text-stroke:0.1px #333;margin-right:0.098px;">P.U. HT</div>
<div class="t" style="left:381.00px;width:400px;text-align:right;top:379.94px;font-size:6.3px;line-height:6.3px;color:#333;font-weight:400;letter-spacing:-0.262px;-webkit-text-stroke:0.1px #333;margin-right:0.262px;">P.U TTC</div>
<div class="t" style="left:409.50px;width:400px;text-align:right;top:379.94px;font-size:6.3px;line-height:6.3px;color:#333;font-weight:400;letter-spacing:-0.177px;-webkit-text-stroke:0.1px #333;margin-right:0.177px;">Qté</div>
<div class="t" style="left:450.50px;width:400px;text-align:right;top:379.94px;font-size:6.3px;line-height:6.3px;color:#333;font-weight:400;letter-spacing:-0.252px;-webkit-text-stroke:0.1px #333;margin-right:0.252px;">Réduc.</div>
<div class="t" style="left:505.00px;width:400px;text-align:right;top:379.94px;font-size:6.3px;line-height:6.3px;color:#333;font-weight:400;letter-spacing:-0.008px;-webkit-text-stroke:0.1px #333;margin-right:0.008px;">Total HT</div>
<svg class="r" style="left:149.0px;top:401.1px;" width="7" height="7" viewBox="0 0 7 7"><path d="M3.5 0.3 L6.6 1.8 L6.6 5.2 L3.5 6.7 L0.4 5.2 L0.4 1.8Z" fill="#a88a35"/><path d="M0.6 1.9 L3.5 3.4 L6.4 1.9 M3.5 3.4 L3.5 6.5" stroke="#fff" stroke-width="0.6" fill="none"/></svg>
<div class="t" style="left:158.00px;top:401.64px;font-size:6.3px;line-height:6.3px;color:#444;font-weight:400;letter-spacing:-0.038px;">Commande CO2203-0012 / REF-0012 (26/03/2022) - Expédition SH2512-0004 (27/12/2025) - Société TEM 78200 Marseille</div>
<svg class="r" style="left:149.0px;top:421.1px;" width="7" height="7" viewBox="0 0 7 7"><path d="M3.5 0.3 L6.6 1.8 L6.6 5.2 L3.5 6.7 L0.4 5.2 L0.4 1.8Z" fill="#a88a35"/><path d="M0.6 1.9 L3.5 3.4 L6.4 1.9 M3.5 3.4 L3.5 6.5" stroke="#fff" stroke-width="0.6" fill="none"/></svg>
<div class="t" style="left:158.00px;top:421.64px;font-size:6.3px;line-height:6.3px;color:#25327a;font-weight:400;letter-spacing:-0.103px;-webkit-text-stroke:0.12px #25327a;">Ref-0023</div>
<div class="t" style="left:185.50px;top:421.64px;font-size:6.3px;line-height:6.3px;color:#444;font-weight:400;letter-spacing:-0.073px;">- Remorque pailleuse</div>
<svg class="r" style="left:149.0px;top:444.8px;" width="7" height="7" viewBox="0 0 7 7"><path d="M3.5 0.3 L6.6 1.8 L6.6 5.2 L3.5 6.7 L0.4 5.2 L0.4 1.8Z" fill="#a88a35"/><path d="M0.6 1.9 L3.5 3.4 L6.4 1.9 M3.5 3.4 L3.5 6.5" stroke="#fff" stroke-width="0.6" fill="none"/></svg>
<div class="t" style="left:158.00px;top:445.34px;font-size:6.3px;line-height:6.3px;color:#444;font-weight:400;letter-spacing:-0.066px;">3% Exceptionnel</div>
<div class="t" style="left:272.80px;width:400px;text-align:right;top:401.64px;font-size:6.3px;line-height:6.3px;color:#444;font-weight:400;">0%</div>
<div class="t" style="left:327.00px;width:400px;text-align:right;top:401.64px;font-size:6.3px;line-height:6.3px;color:#444;font-weight:400;">0,00</div>
<div class="t" style="left:381.00px;width:400px;text-align:right;top:401.64px;font-size:6.3px;line-height:6.3px;color:#444;font-weight:400;">0,00</div>
<div class="t" style="left:408.80px;width:400px;text-align:right;top:401.64px;font-size:6.3px;line-height:6.3px;color:#444;font-weight:400;">1</div>
<div class="t" style="left:505.00px;width:400px;text-align:right;top:401.64px;font-size:6.3px;line-height:6.3px;color:#444;font-weight:400;">0,00</div>
<div class="t" style="left:272.80px;width:400px;text-align:right;top:421.64px;font-size:6.3px;line-height:6.3px;color:#444;font-weight:400;">0%</div>
<div class="t" style="left:326.00px;width:400px;text-align:right;top:421.64px;font-size:6.3px;line-height:6.3px;color:#444;font-weight:400;">17 842,50</div>
<div class="t" style="left:379.50px;width:400px;text-align:right;top:421.64px;font-size:6.3px;line-height:6.3px;color:#444;font-weight:400;">17 842,50</div>
<div class="t" style="left:407.80px;width:400px;text-align:right;top:421.64px;font-size:6.3px;line-height:6.3px;color:#444;font-weight:400;">5</div>
<div class="t" style="left:450.00px;width:400px;text-align:right;top:421.64px;font-size:6.3px;line-height:6.3px;color:#444;font-weight:400;">30%</div>
<div class="t" style="left:503.60px;width:400px;text-align:right;top:421.64px;font-size:6.3px;line-height:6.3px;color:#444;font-weight:400;">62 448,75</div>
<div class="t" style="left:272.80px;width:400px;text-align:right;top:445.34px;font-size:6.3px;line-height:6.3px;color:#444;font-weight:400;">0%</div>
<div class="t" style="left:326.00px;width:400px;text-align:right;top:445.34px;font-size:6.3px;line-height:6.3px;color:#444;font-weight:400;">-417,9876</div>
<div class="t" style="left:380.00px;width:400px;text-align:right;top:445.34px;font-size:6.3px;line-height:6.3px;color:#444;font-weight:400;">-417,9876</div>
<div class="t" style="left:408.00px;width:400px;text-align:right;top:445.34px;font-size:6.3px;line-height:6.3px;color:#444;font-weight:400;">1</div>
<div class="t" style="left:503.50px;width:400px;text-align:right;top:445.34px;font-size:6.3px;line-height:6.3px;color:#444;font-weight:400;">-417,99</div>
<div class="r" style="left:536.10px;top:476.40px;width:35.90px;height:15.40px;background:#3c50b6;border-radius:1.5px;box-shadow:0 1px 2px rgba(0,0,0,0.25);"></div>
<div class="t" style="left:504.05px;width:100px;text-align:center;top:481.89px;font-size:6.4px;line-height:6.4px;color:#ffffff;font-weight:700;letter-spacing:-0.584px;">MODIFIER</div>
<div class="r" style="left:578.80px;top:476.40px;width:53.70px;height:15.40px;background:#3c50b6;border-radius:1.5px;box-shadow:0 1px 2px rgba(0,0,0,0.25);"></div>
<div class="t" style="left:555.65px;width:100px;text-align:center;top:481.89px;font-size:6.4px;line-height:6.4px;color:#ffffff;font-weight:700;letter-spacing:-0.665px;">ENVOYER EMAIL</div>
<div class="r" style="left:639.10px;top:476.40px;width:60.60px;height:15.40px;background:#3c50b6;border-radius:1.5px;box-shadow:0 1px 2px rgba(0,0,0,0.25);"></div>
<div class="t" style="left:619.40px;width:100px;text-align:center;top:481.89px;font-size:6.4px;line-height:6.4px;color:#ffffff;font-weight:700;letter-spacing:-0.760px;">SAISIR RÈGLEMENT</div>
<div class="r" style="left:706.40px;top:476.40px;width:78.30px;height:15.40px;background:#3c50b6;border-radius:1.5px;box-shadow:0 1px 2px rgba(0,0,0,0.25);"></div>
<div class="t" style="left:695.55px;width:100px;text-align:center;top:481.89px;font-size:6.4px;line-height:6.4px;color:#ffffff;font-weight:700;letter-spacing:-0.614px;">CLASSER 'ABANDONNÉE'</div>
<div class="r" style="left:791.10px;top:476.40px;width:74.60px;height:15.40px;background:#3c50b6;border-radius:1.5px;box-shadow:0 1px 2px rgba(0,0,0,0.25);"></div>
<div class="t" style="left:778.40px;width:100px;text-align:center;top:481.89px;font-size:6.4px;line-height:6.4px;color:#ffffff;font-weight:700;letter-spacing:-0.547px;">CRÉER FACTURE AVOIR</div>
<div class="r" style="left:872.10px;top:476.40px;width:31.70px;height:15.40px;background:#3c50b6;border-radius:1.5px;box-shadow:0 1px 2px rgba(0,0,0,0.25);"></div>
<div class="t" style="left:837.95px;width:100px;text-align:center;top:481.89px;font-size:6.4px;line-height:6.4px;color:#ffffff;font-weight:700;letter-spacing:-0.804px;">CLONER</div>
<div class="r" style="left:910.40px;top:476.40px;width:49.30px;height:15.40px;background:#f5f5f7;border:1px solid #d8d8dc;box-sizing:border-box;border-radius:1.5px;"></div>
<div class="t" style="left:885.05px;width:100px;text-align:center;top:481.89px;font-size:6.4px;line-height:6.4px;color:#b0b0b4;font-weight:700;letter-spacing:-0.269px;">SUPPRIMER</div>
<div class="t" style="left:139.70px;top:523.49px;font-size:7.0px;line-height:7.0px;color:#555;font-weight:400;letter-spacing:0.222px;">Fichiers joints</div>
<div class="r" style="left:139.70px;top:541.20px;width:398.30px;height:43.00px;background:#ffffff;border-radius:3px;box-shadow:0 0 1px rgba(0,0,0,0.25);"></div>
<div class="r" style="left:139.70px;top:541.20px;width:398.30px;height:19.60px;background:#d4e2f5;border-radius:3px 3px 0 0;"></div>
<div class="t" style="left:-76.10px;width:400px;text-align:right;top:547.94px;font-size:6.3px;line-height:6.3px;color:#444;font-weight:400;letter-spacing:-0.043px;margin-right:0.043px;">Modèle de document</div>
<div class="r" style="left:325.90px;top:544.90px;width:36.10px;height:13.20px;background:#ffffff;box-shadow:0 1px 1px rgba(0,0,0,0.12);"></div>
<div class="t" style="left:328.50px;top:548.54px;font-size:6.3px;line-height:6.3px;color:#222;font-weight:400;letter-spacing:-0.234px;">sponge</div>
<svg class="r" style="left:354px;top:550.5px;" width="4" height="3" viewBox="0 0 4 3"><path d="M0.3 0.3 L3.7 0.3 L2 2.5Z" fill="#888"/></svg>
<div class="r" style="left:367.10px;top:546.30px;width:43.60px;height:11.10px;background:#f4f4f4;border:1px solid #b8b8b8;box-sizing:border-box;border-radius:1px;"></div>
<div class="t" style="left:358.90px;width:60px;text-align:center;top:548.54px;font-size:6.3px;line-height:6.3px;color:#555;font-weight:400;letter-spacing:-0.109px;-webkit-text-stroke:0.1px #555;">GÉNÉRER</div>
<svg class="r" style="left:145.8px;top:569.5px;" width="5" height="7" viewBox="0 0 5 7"><path d="M0.2 0.2 L3.2 0.2 L4.8 1.8 L4.8 6.8 L0.2 6.8Z" fill="#25337c"/><rect x="1" y="3" width="3" height="0.7" fill="#fff"/><rect x="1" y="4.6" width="3" height="0.7" fill="#fff"/></svg>
<div class="t" style="left:153.90px;top:569.74px;font-size:6.3px;line-height:6.3px;color:#25337c;font-weight:400;letter-spacing:-0.010px;-webkit-text-stroke:0.1px #25337c;">FA2512-0057.pdf</div>
<svg class="r" style="left:303px;top:569.5px;" width="7" height="7" viewBox="0 0 7 7"><circle cx="2.8" cy="2.8" r="2.2" fill="none" stroke="#666" stroke-width="0.9"/><path d="M4.4 4.4 L6.5 6.5" stroke="#666" stroke-width="1.2"/><path d="M1.8 2.8 L3.8 2.8 M2.8 1.8 L2.8 3.8" stroke="#666" stroke-width="0.6"/></svg>
<div class="t" style="left:360.50px;top:570.14px;font-size:6.3px;line-height:6.3px;color:#555;font-weight:400;letter-spacing:-0.037px;">9086 o.</div>
<div class="t" style="left:437.80px;top:570.14px;font-size:6.3px;line-height:6.3px;color:#555;font-weight:400;letter-spacing:-0.012px;">27/12/2025 11:13</div>
<svg class="r" style="left:527.2px;top:568.6px;" width="6" height="8" viewBox="0 0 6 8"><rect x="0.3" y="0.8" width="5.4" height="1" fill="#555"/><rect x="2" y="0" width="2" height="1" fill="#555"/><path d="M0.9 2.2 L5.1 2.2 L4.7 7.4 L1.3 7.4Z" fill="#555"/></svg>
<div class="t" style="left:139.70px;top:601.79px;font-size:7.0px;line-height:7.0px;color:#555;font-weight:400;letter-spacing:0.222px;">Objets liés</div>
<svg class="r" style="left:510px;top:602px;" width="6" height="7" viewBox="0 0 6 7"><path d="M2.4 3.6 L3.8 2.2 M1.6 5.8 Q0.2 4.4 1.6 3 L2.6 2 M4.4 1.2 Q5.8 2.6 4.4 4 L3.4 5" stroke="#25337c" stroke-width="0.9" fill="none"/></svg>
<div class="t" style="left:516.80px;top:602.74px;font-size:6.3px;line-height:6.3px;color:#25337c;font-weight:400;letter-spacing:0.163px;">Lier à..</div>
<div class="r" style="left:140.10px;top:620.20px;width:398.30px;height:66.80px;background:#ffffff;border-radius:3px;box-shadow:0 0 1px rgba(0,0,0,0.3);"></div>
<div class="r" style="left:140.10px;top:620.20px;width:398.30px;height:19.40px;background:#d4e2f5;border-radius:3px 3px 0 0;"></div>
<div class="r" style="left:140.10px;top:663.10px;width:398.30px;height:23.90px;background:#f8f8f9;border-radius:0 0 3px 3px;"></div>
<div class="r" style="left:140.10px;top:662.80px;width:398.30px;height:0.50px;background:#ececec;"></div>
<div class="t" style="left:145.80px;top:626.74px;font-size:6.3px;line-height:6.3px;color:#555;font-weight:400;letter-spacing:-0.219px;">Type</div>
<div class="t" style="left:229.60px;top:626.74px;font-size:6.3px;line-height:6.3px;color:#555;font-weight:400;letter-spacing:-0.352px;">Réf.</div>
<div class="t" style="left:386.20px;top:626.74px;font-size:6.3px;line-height:6.3px;color:#555;font-weight:400;letter-spacing:-0.136px;">Date</div>
<div class="t" style="left:78.00px;width:400px;text-align:right;top:626.74px;font-size:6.3px;line-height:6.3px;color:#555;font-weight:400;letter-spacing:-0.101px;margin-right:0.101px;">Montant HT</div>
<div class="t" style="left:498.50px;top:626.74px;font-size:6.3px;line-height:6.3px;color:#555;font-weight:400;letter-spacing:-0.069px;">État</div>
<div class="t" style="left:145.80px;top:648.44px;font-size:6.3px;line-height:6.3px;color:#555;font-weight:400;letter-spacing:-0.044px;">Commande client</div>
<svg class="r" style="left:229.6px;top:648px;" width="5" height="7" viewBox="0 0 5 7"><path d="M0.2 0.2 L3.2 0.2 L4.8 1.8 L4.8 6.8 L0.2 6.8Z" fill="#5b9a3a"/><rect x="1" y="3" width="3" height="0.7" fill="#fff"/><rect x="1" y="4.6" width="3" height="0.7" fill="#fff"/></svg>
<div class="t" style="left:236.00px;top:648.44px;font-size:6.3px;line-height:6.3px;color:#25337c;font-weight:400;letter-spacing:-0.058px;-webkit-text-stroke:0.15px #25337c;">CO2203-0012</div>
<div class="t" style="left:312.10px;top:648.44px;font-size:6.3px;line-height:6.3px;color:#555;font-weight:400;letter-spacing:-0.073px;">REF-0012</div>
<div class="t" style="left:376.70px;top:648.44px;font-size:6.3px;line-height:6.3px;color:#555;font-weight:400;letter-spacing:-0.070px;">26/03/2022</div>
<div class="t" style="left:78.00px;width:400px;text-align:right;top:648.44px;font-size:6.3px;line-height:6.3px;color:#555;font-weight:400;letter-spacing:-0.128px;margin-right:0.128px;">13 932,92</div>
<div class="t" style="left:145.80px;top:672.04px;font-size:6.3px;line-height:6.3px;color:#555;font-weight:400;letter-spacing:0.009px;">Expédition</div>
<svg class="r" style="left:229.2px;top:671.5px;" width="8" height="7" viewBox="0 0 8 7"><path d="M0.5 0.8 L2.6 0.8 L4 4.6 L7.4 4.6" stroke="#5b9a3a" stroke-width="0.9" fill="none"/><rect x="3.2" y="1.2" width="3.4" height="2.8" fill="#5b9a3a" transform="rotate(-15 5 2.6)"/><circle cx="4.2" cy="6" r="0.8" fill="#5b9a3a"/><circle cx="6.8" cy="6" r="0.8" fill="#5b9a3a"/></svg>
<div class="t" style="left:238.70px;top:672.04px;font-size:6.3px;line-height:6.3px;color:#25337c;font-weight:400;letter-spacing:-0.108px;-webkit-text-stroke:0.15px #25337c;">SH2512-0004</div>
<div class="t" style="left:312.10px;top:672.04px;font-size:6.3px;line-height:6.3px;color:#555;font-weight:400;letter-spacing:-0.073px;">REF-0012</div>
<div class="t" style="left:376.70px;top:672.04px;font-size:6.3px;line-height:6.3px;color:#555;font-weight:400;letter-spacing:-0.070px;">29/12/2025</div>
<div class="t" style="left:78.00px;width:400px;text-align:right;top:672.04px;font-size:6.3px;line-height:6.3px;color:#555;font-weight:400;letter-spacing:-0.128px;margin-right:0.128px;">62 448,75</div>
<div class="r" style="left:502.80px;top:647.40px;width:7.00px;height:7.00px;background:#21a077;border-radius:50%;"></div>
<svg class="r" style="left:526.6px;top:647.5px;" width="7.5" height="7" viewBox="0 0 7.5 7"><path d="M3.0 1.7 Q4.3 0.2 5.8 1.0 Q7.0 2.0 6.0 3.6 L5.2 4.4 M4.4 5.4 Q3.1 6.8 1.6 6.0 Q0.4 5.0 1.4 3.4 L2.2 2.6 M0.9 0.7 L6.6 6.4" stroke="#333" stroke-width="0.95" fill="none" stroke-linecap="round"/></svg>
<div class="r" style="left:502.80px;top:671.10px;width:7.00px;height:7.00px;background:#21a077;border-radius:50%;"></div>
<svg class="r" style="left:526.6px;top:671.2px;" width="7.5" height="7" viewBox="0 0 7.5 7"><path d="M3.0 1.7 Q4.3 0.2 5.8 1.0 Q7.0 2.0 6.0 3.6 L5.2 4.4 M4.4 5.4 Q3.1 6.8 1.6 6.0 Q0.4 5.0 1.4 3.4 L2.2 2.6 M0.9 0.7 L6.6 6.4" stroke="#333" stroke-width="0.95" fill="none" stroke-linecap="round"/></svg>
<div class="r" style="left:132.90px;top:611.90px;width:426.20px;height:83.90px;background:transparent;border:5.2px solid #e8141c;box-sizing:border-box;"></div>
<div class="t" style="left:558.20px;top:523.39px;font-size:7.0px;line-height:7.0px;color:#555;font-weight:400;letter-spacing:0.187px;">Les 10 derniers événements</div>
<div class="r" style="left:829.30px;top:518.00px;width:34.70px;height:18.40px;background:#f0f1f6;border:1px solid #e9eaee;box-sizing:border-box;border-radius:2px;"></div>
<div class="r" style="left:869.30px;top:518.00px;width:35.30px;height:18.40px;background:#f0f1f6;border:1px solid #e9eaee;box-sizing:border-box;border-radius:2px;"></div>
<svg class="r" style="left:839.5px;top:520.5px;" width="15" height="13" viewBox="0 0 15 13"><ellipse cx="5.6" cy="4.6" rx="5" ry="4" fill="#a4a4a4"/><path d="M1.6 7.4 L0.8 9.6 L4.4 8.2Z" fill="#a4a4a4"/><ellipse cx="9.8" cy="8.2" rx="4.2" ry="3.6" fill="#a4a4a4" stroke="#f0f1f6" stroke-width="0.8"/><path d="M12.4 10.6 L13.6 12.6 L10.4 11.6Z" fill="#a4a4a4"/></svg>
<svg class="r" style="left:881px;top:520px;" width="12" height="12" viewBox="0 0 12 12"><path d="M1 3.0 L11.3 3.0 M1 6.6 L11.3 6.6 M1 10.3 L11.3 10.3" stroke="#a2a2a2" stroke-width="1.5"/></svg>
<div class="r" style="left:558.20px;top:541.20px;width:398.20px;height:43.00px;background:#ffffff;border-radius:3px;box-shadow:0 0 1px rgba(0,0,0,0.25);"></div>
<div class="r" style="left:558.20px;top:541.20px;width:398.20px;height:19.80px;background:#d4e2f5;border-radius:3px 3px 0 0;"></div>
<div class="t" style="left:564.00px;top:549.14px;font-size:6.7px;line-height:6.7px;color:#555;font-weight:400;letter-spacing:-0.596px;">Réf.</div>
<svg class="r" style="left:623.2px;top:550.5px;" width="4" height="3" viewBox="0 0 4 3"><path d="M0.2 2.8 L3.8 2.8 L2 0.4Z" fill="#444"/></svg>
<div class="t" style="left:629.00px;top:549.14px;font-size:6.7px;line-height:6.7px;color:#555;font-weight:400;letter-spacing:-0.384px;">Date</div>
<div class="t" style="left:674.40px;top:549.14px;font-size:6.7px;line-height:6.7px;color:#555;font-weight:400;letter-spacing:-0.463px;">Par</div>
<div class="t" style="left:726.00px;top:549.14px;font-size:6.7px;line-height:6.7px;color:#555;font-weight:400;letter-spacing:-0.508px;">Type</div>
<div class="t" style="left:808.40px;top:549.14px;font-size:6.7px;line-height:6.7px;color:#555;font-weight:400;letter-spacing:-0.413px;">Titre</div>
<svg class="r" style="left:564.2px;top:569px;" width="6" height="7" viewBox="0 0 6 7"><rect x="0.3" y="1" width="5.4" height="5.8" fill="#b04060"/><rect x="1" y="3" width="4" height="3.2" fill="#fff" opacity="0.5"/><rect x="1.3" y="0" width="0.8" height="1.5" fill="#b04060"/><rect x="3.9" y="0" width="0.8" height="1.5" fill="#b04060"/></svg>
<div class="t" style="left:571.80px;top:569.64px;font-size:6.3px;line-height:6.3px;color:#25337c;font-weight:400;letter-spacing:-0.239px;-webkit-text-stroke:0.15px #25337c;">3084</div>
<div class="t" style="left:612.70px;top:569.64px;font-size:6.3px;line-height:6.3px;color:#555;font-weight:400;letter-spacing:-0.039px;">27/12/25 11:11</div>
<svg class="r" style="left:674.5px;top:567.5px;" width="7" height="10" viewBox="0 0 7 10"><path d="M1 10 Q1.2 7.2 3.5 7 Q5.8 7.2 6 10Z" fill="#2a2a2e"/><path d="M1.1 7.2 Q0.4 2.4 2 1 Q3.5 0 5 1 Q6.6 2.4 5.9 7.2Z" fill="#c17a1a"/><ellipse cx="3.7" cy="4.4" rx="1.5" ry="2" fill="#f6cf9f"/></svg>
<div class="t" style="left:684.70px;top:569.64px;font-size:6.3px;line-height:6.3px;color:#25337c;font-weight:400;letter-spacing:-0.087px;-webkit-text-stroke:0.15px #25337c;">demo</div>
<svg class="r" style="left:726px;top:569.8px;" width="6" height="6" viewBox="0 0 6 6"><g transform="translate(3,3)"><circle r="1.9" fill="none" stroke="#777" stroke-width="1"/><rect x="-0.5" y="-2.8" width="1" height="1.2" fill="#777" transform="rotate(0)"/><rect x="-0.5" y="-2.8" width="1" height="1.2" fill="#777" transform="rotate(45)"/><rect x="-0.5" y="-2.8" width="1" height="1.2" fill="#777" transform="rotate(90)"/><rect x="-0.5" y="-2.8" width="1" height="1.2" fill="#777" transform="rotate(135)"/><rect x="-0.5" y="-2.8" width="1" height="1.2" fill="#777" transform="rotate(180)"/><rect x="-0.5" y="-2.8" width="1" height="1.2" fill="#777" transform="rotate(225)"/><rect x="-0.5" y="-2.8" width="1" height="1.2" fill="#777" transform="rotate(270)"/><rect x="-0.5" y="-2.8" width="1" height="1.2" fill="#777" transform="rotate(315)"/></g></svg>
<div class="t" style="left:737.40px;top:569.64px;font-size:6.3px;line-height:6.3px;color:#555;font-weight:400;letter-spacing:-0.220px;">Événements inséré...</div>
<div class="t" style="left:808.40px;top:569.64px;font-size:6.3px;line-height:6.3px;color:#25337c;font-weight:400;letter-spacing:-0.052px;-webkit-text-stroke:0.15px #25337c;">Facture FA2512-0057 validée</div>
<div class="r" style="left:945.50px;top:569.20px;width:6.50px;height:6.50px;background:#e4ecee;border-radius:50%;"></div>
<div class="r" style="left:125.00px;top:705.80px;width:844.00px;height:0.80px;background:#e0e1e6;"></div>
<div class="t" style="left:138.60px;top:711.77px;font-size:5.2px;line-height:5.2px;color:#999;font-weight:400;letter-spacing:-0.021px;">© 2025 DoliMarketPlace</div>
<div class="t" style="left:851.00px;top:711.57px;font-size:5.4px;line-height:5.4px;color:#888;font-weight:400;letter-spacing:0.063px;">Crafted with</div>
<svg class="r" style="left:882.0px;top:711.5px;" width="5" height="5" viewBox="0 0 5 5"><path d="M2.5 4.6 L0.5 2.4 Q-0.2 1 1.1 0.5 Q2 0.3 2.5 1.2 Q3 0.3 3.9 0.5 Q5.2 1 4.5 2.4Z" fill="#e8141c"/></svg>
<div class="t" style="left:888.50px;top:711.67px;font-size:5.2px;line-height:5.2px;color:#888;font-weight:400;letter-spacing:0.008px;">by</div>
<div class="t" style="left:895.80px;top:711.67px;font-size:5.2px;line-height:5.2px;color:#25337c;font-weight:400;letter-spacing:-0.033px;">DoliMarketPlace</div>
<div class="r" style="left:945.90px;top:677.80px;width:19.50px;height:19.50px;background:#3c50b6;border-radius:50%;box-shadow:0 1px 3px rgba(0,0,0,0.3);"></div>
<svg class="r" style="left:951.5px;top:684.5px;" width="8" height="5" viewBox="0 0 8 5"><path d="M1 4 L4 1 L7 4" stroke="#fff" stroke-width="1.3" fill="none"/></svg>
<div class="r" style="left:945.90px;top:701.00px;width:19.50px;height:19.50px;background:#3c50b6;border-radius:50%;box-shadow:0 1px 3px rgba(0,0,0,0.3);"></div>
<svg class="r" style="left:951px;top:706px;" width="10" height="10" viewBox="0 0 10 10"><g transform="translate(5,5)"><circle r="3" fill="#fff"/><rect x="-1" y="-4.3" width="2" height="2.2" fill="#fff" transform="rotate(0)"/><rect x="-1" y="-4.3" width="2" height="2.2" fill="#fff" transform="rotate(45)"/><rect x="-1" y="-4.3" width="2" height="2.2" fill="#fff" transform="rotate(90)"/><rect x="-1" y="-4.3" width="2" height="2.2" fill="#fff" transform="rotate(135)"/><rect x="-1" y="-4.3" width="2" height="2.2" fill="#fff" transform="rotate(180)"/><rect x="-1" y="-4.3" width="2" height="2.2" fill="#fff" transform="rotate(225)"/><rect x="-1" y="-4.3" width="2" height="2.2" fill="#fff" transform="rotate(270)"/><rect x="-1" y="-4.3" width="2" height="2.2" fill="#fff" transform="rotate(315)"/><circle r="1.2" fill="#3c50b6"/></g></svg>
</body></html>
